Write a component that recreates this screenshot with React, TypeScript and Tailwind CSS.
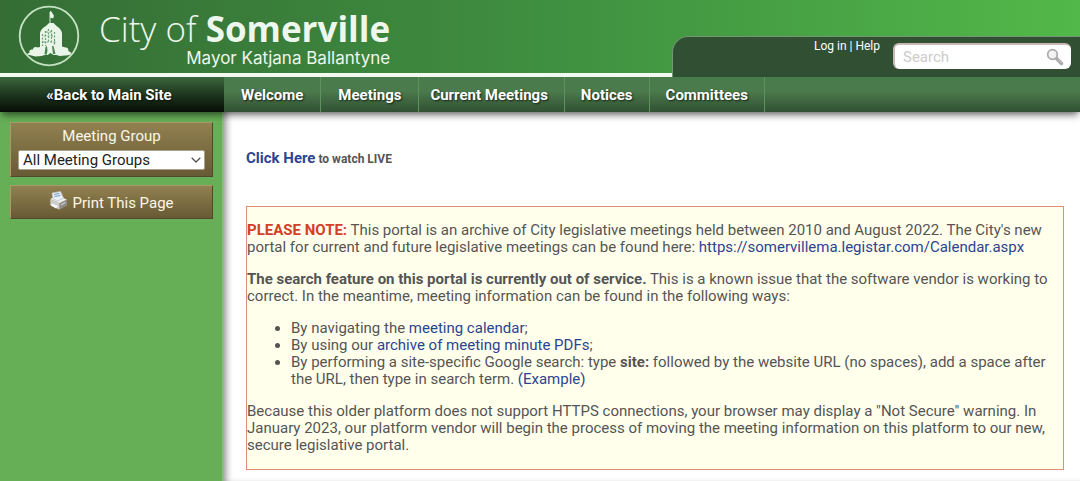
import React from "react";

const navItems = [
  { label: "Welcome", pad: "px-[17px]" },
  { label: "Meetings", pad: "px-[17px]" },
  { label: "Current Meetings", pad: "pl-[11px] pr-4" },
  { label: "Notices", pad: "px-4" },
  { label: "Committees", pad: "px-4" },
];

const raised =
  "border border-t-[#a99a6a] border-l-[#a99a6a] border-r-[#51492b] border-b-[#51492b] bg-linear-to-b from-[#928150] to-[#675a35]";

function CitySeal() {
  return (
    <svg viewBox="0 0 64 64" className="h-16 w-16 shrink-0" aria-hidden="true">
      <circle cx="32" cy="32" r="29.3" fill="none" stroke="#c5e3c4" strokeWidth="1.8" />
      <path d="M33 22V8" stroke="#d5ead4" strokeWidth="1" />
      <path d="M33 7c1.500 0 2 1.500 3 3l1 2-1 2.500-3-1z" fill="#e9f5e8" />
      <path
        d="M33 19c-2 0-2.500 2-4 3-3 1.500-5.500 4-6 7v14l-3 .5c-2-1-4 0-4 2-3-.5-4 1-3.500 3l-3 2 3 .5 6 1.500 6-.5 3-1 3 0 3-2 3 2 3 0 3 1 6-.5 4-.5 2-2-3-2c0-2-1-4-3-3.500l-3.500-1V29c-.5-3-3-5.500-5.500-7-1.500-1-2-3-3.500-3z"
        fill="#e9f5e8"
      />
      <path
        d="M25.500 30v12M28.500 27v15M31.500 25v14M34.500 26v13M37.500 28v14M27 32h11M26 38h13M29 28h7"
        stroke="#6f9f72"
        strokeWidth="1.200"
        strokeDasharray="2 1.500"
        fill="none"
      />
      <path d="M27.500 50l1-7 1.500-1 .5 5-1 4zM36 50l-1-8 1.500 0 2 8z" fill="#4b8550" />
    </svg>
  );
}

function PrinterIcon() {
  return (
    <svg viewBox="0 0 20 20" className="mb-[6px] h-5 w-5" aria-hidden="true">
      <path d="M1.500 8l5-3 11 3.500v6L10 18.500 1.500 14z" fill="#aaa9a6" />
      <path d="M1.500 8l6-3.500L18 8.500 10.500 12z" fill="#ededeb" />
      <path d="M4 7.500L3 2l8.500-1.500 3 6.500-6 3z" fill="#e9f0f6" stroke="#b8c1c7" strokeWidth=".7" />
      <path d="M5 3.500l5.500-1M5.500 5.500l6-1" stroke="#7196bd" strokeWidth="1" />
      <path d="M1.500 8.500l9 3.500v6.500l-9-4z" fill="#cecdca" />
      <path d="M10.500 12.500l7.500-4v5.500l-7.500 4.500z" fill="#8d8b88" />
      <path d="M3 12.500l6 2.500-2 2.500-5-3z" fill="#f7f7f5" />
      <path d="M12 14l4.500-2.500" stroke="#deddda" strokeWidth="1" />
    </svg>
  );
}

function SearchIcon() {
  return (
    <svg viewBox="0 0 18 18" className="h-[18px] w-[18px]" aria-hidden="true">
      <path d="M10 10l5.500 5.500" stroke="#a7a7a7" strokeWidth="3.500" strokeLinecap="round" />
      <path d="M11.500 11l4 4" stroke="#c9c9c9" strokeWidth="1" />
      <circle cx="6.500" cy="6.500" r="4.800" fill="#f2f2f2" stroke="#a9a9a9" strokeWidth="1.700" />
      <path d="M4 6a3 3 0 012.500-2" stroke="#fff" strokeWidth="1" fill="none" />
    </svg>
  );
}

function Header() {
  return (
    <header className="flex h-[77px] justify-between bg-linear-to-r from-[#356d35] via-[#3f8f40] to-[#52b849]">
      <div className="flex min-w-0 flex-1 border-b-4 border-[#f3faf2] pl-[17px]">
        <div className="pt-1">
          <CitySeal />
        </div>
        <div className="ml-[18px] flex flex-col items-end whitespace-nowrap text-[#eef7ed]">
          <div className="pt-2 font-['Open_Sans',sans-serif] text-[35px] leading-[42px]">
            <span className="font-light">City of </span>
            <span className="font-bold">Somerville</span>
          </div>
          <div className="font-['Inter',sans-serif] text-[17px] leading-4">Mayor Katjana Ballantyne</div>
        </div>
      </div>
      <div className="mt-9 flex w-[408px] shrink-0 items-start justify-end gap-[13px] rounded-tl-2xl border-t border-l border-[#719873] bg-[#315033] pr-[9px]">
        <div className="pt-px text-[12px] leading-[17px] text-white">
          <a href="#login">Log in</a> | <a href="#help">Help</a>
        </div>
        <form role="search" className="mt-[6px] flex h-[26px] w-[178px] items-center rounded-md border-t-2 border-l-2 border-[#c8b9b9] bg-white pr-[7px] pl-2">
          <input
            type="search"
            aria-label="Search"
            placeholder="Search"
            className="min-w-0 flex-1 bg-transparent text-[15px] leading-5 text-gray-700 outline-none placeholder:text-[#cccccc]"
          />
          <button type="button" aria-label="Submit search">
            <SearchIcon />
          </button>
        </form>
      </div>
    </header>
  );
}

function Navigation() {
  return (
    <nav className="relative z-10 flex h-[35px] bg-linear-to-b from-[#487b4b] via-[#4b7b4d] via-40% to-[#315033] text-[15px] font-bold text-white shadow-[0_5px_7px_-2px_rgba(0,0,0,0.55)] text-shadow-[1px_1px_2px_rgba(0,0,0,0.7)]">
      <a
        href="#main-site"
        className="flex w-56 shrink-0 items-center justify-center bg-linear-to-b from-[#3b673d] to-[#060d06] pt-px pr-[6px]"
      >
        «Back to Main Site
      </a>
      {navItems.map((item) => (
        <a
          key={item.label}
          href="#nav"
          className={`flex items-center whitespace-nowrap border-r border-[#5d925f] pt-px ${item.pad}`}
        >
          {item.label}
        </a>
      ))}
    </nav>
  );
}

function Sidebar() {
  return (
    <aside className="flex w-[223px] shrink-0 flex-col gap-2 border-r border-[#83bf78] bg-[#66af57] px-[9px] pt-[10px] pl-[10px] text-[15px] text-[#fbf7e8]">
      <div className={`flex flex-col px-[7px] pt-[5px] pb-[6px] ${raised}`}>
        <label htmlFor="meeting-group" className="text-center leading-4">
          Meeting Group
        </label>
        <div className="relative mt-[6px] flex">
          <select
            id="meeting-group"
            className="h-5 w-full appearance-none rounded-xs border border-[#a9a28c] bg-white pl-1 text-[15px] leading-[18px] text-[#222]"
          >
            <option>All Meeting Groups</option>
          </select>
          <svg viewBox="0 0 10 6" className="pointer-events-none absolute top-[7px] right-1 h-[6px] w-[10px]" aria-hidden="true">
            <path d="M.7.7L5 5 9.300.7" fill="none" stroke="#555" strokeWidth="1.300" />
          </svg>
        </div>
      </div>
      <button type="button" className={`flex h-[34px] items-center justify-center gap-[3px] pt-[3px] ${raised}`}>
        <PrinterIcon />
        Print This Page
      </button>
    </aside>
  );
}

const link = "text-[#2b4492]";

function Notice() {
  return (
    <section className="mt-[38px] flex flex-col gap-[15px] border border-[#df8c79] bg-[#ffffec] py-[15px] text-[15px] leading-[17px]">
      <p>
        <strong className="text-[#d2402c]">PLEASE NOTE:</strong> This portal is an archive of City legislative meetings
        held between 2010 and August 2022. The City's new portal for current and future legislative meetings can be
        found here:{" "}
        <a href="https://somervillema.legistar.com/Calendar.aspx" className={link}>
          https://somervillema.legistar.com/Calendar.aspx
        </a>
      </p>
      <p>
        <strong>The search feature on this portal is currently out of service.</strong> This is a known issue that the
        software vendor is working to correct. In the meantime, meeting information can be found in the following ways:
      </p>
      <ul className="list-disc pl-11">
        <li>
          By navigating the <a href="#calendar" className={link}>meeting calendar</a>;
        </li>
        <li>
          By using our <a href="#archive" className={link}>archive of meeting minute PDFs</a>;
        </li>
        <li>
          By performing a site-specific Google search: type <strong>site:</strong> followed by the website URL (no
          spaces), add a space after the URL, then type in search term. <a href="#example" className={link}>(Example)</a>
        </li>
      </ul>
      <p>
        Because this older platform does not support HTTPS connections, your browser may display a "Not Secure" warning.
        In January 2023, our platform vendor will begin the process of moving the meeting information on this platform to
        our new, secure legislative portal.
      </p>
    </section>
  );
}

export default function App() {
  return (
    <div className="flex min-h-screen flex-col bg-white font-['Roboto',sans-serif] text-[#555]">
      <Header />
      <Navigation />
      <div className="flex flex-1">
        <Sidebar />
        <main className="min-w-0 flex-1 pt-[38px] pr-4 pb-[11px] pl-[23px] shadow-[inset_7px_0_7px_-4px_rgba(0,0,0,0.45)]">
          <p className="text-[12px] leading-[17px] font-bold">
            <a href="#live" className={`text-[15px] ${link}`}>Click Here</a> to watch LIVE
          </p>
          <Notice />
        </main>
      </div>
    </div>
  );
}
